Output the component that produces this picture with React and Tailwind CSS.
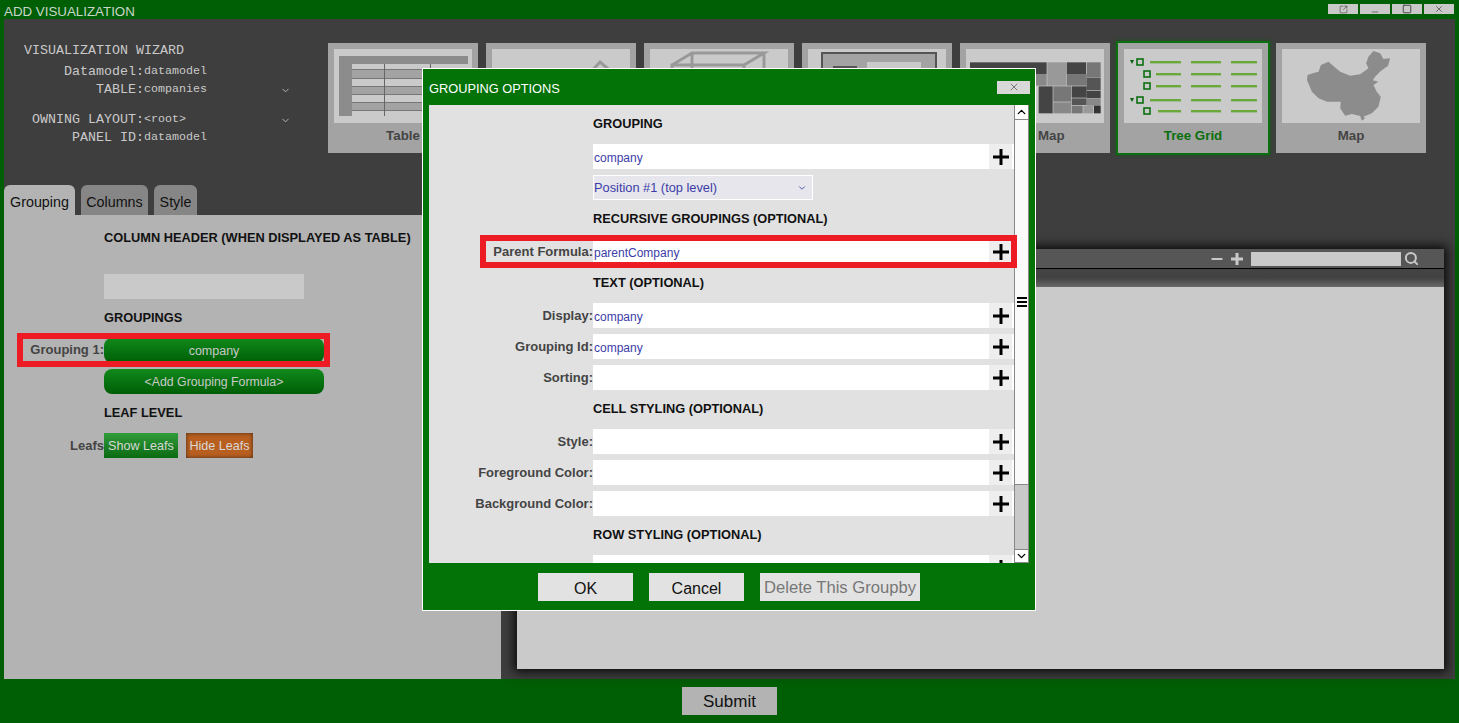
import React from "react";
import { ChevronDown, ChevronUp, Minus, Search, Square, SquareArrowOutUpRight, X } from "lucide-react";

const CHINA =
  "592,120 610,114 625,110 632,90 655,80 672,95 690,110 720,122 750,118 775,100 768,85 775,65 790,48 810,55 820,72 840,70 834,92 812,108 795,125 788,136 805,140 790,150 800,170 812,185 805,215 785,235 760,245 765,250 755,257 750,243 725,237 705,242 690,220 692,200 650,200 625,190 605,170 590,135";

const BLOCKS = [
  ["#444", -180, 52, 230, 35],
  ["#999", 52, 52, 56, 70],
  ["#444", 110, 52, 58, 35],
  ["#777", 170, 52, 42, 45],
  ["#888", 14, 87, 36, 35],
  ["#777", 110, 87, 60, 35],
  ["#555", 170, 98, 42, 37],
  ["#444", 26, 124, 42, 81],
  ["#777", 70, 124, 53, 46],
  ["#444", 125, 124, 45, 34],
  ["#444", 170, 137, 42, 23],
  ["#555", 125, 160, 45, 20],
  ["#888", 170, 162, 42, 20],
  ["#888", 70, 172, 53, 33],
  ["#777", 125, 182, 33, 23],
  ["#999", 160, 182, 30, 23],
  ["#333", 192, 182, 20, 23],
];

const TREE_ROWS = [
  { y: 13, box: 13, arrow: true, first: 26 },
  { y: 25, box: 20, first: 32 },
  { y: 37, box: 20, first: 32 },
  { y: 51, box: 13, arrow: true, first: 26 },
  { y: 62, box: 20, first: 34 },
];

function TableIcon() {
  return (
    <svg viewBox="0 0 138 74" className="w-full h-full">
      <rect x="5" y="7" width="129" height="8" fill="#8c8c8c" />
      <rect x="5" y="7" width="13" height="60" fill="#8c8c8c" />
      <rect x="18" y="21" width="116" height="8" fill="#a3a3a3" />
      <rect x="18" y="37" width="116" height="8" fill="#a3a3a3" />
      <rect x="18" y="53" width="116" height="8" fill="#a3a3a3" />
      {[20, 29, 37, 45, 53, 61].map((y) => (
        <rect key={y} x="18" y={y} width="116" height="1" fill="#777" />
      ))}
      <rect x="50" y="15" width="1" height="52" fill="#666" />
      <rect x="96" y="15" width="1" height="52" fill="#666" />
    </svg>
  );
}

function ChartIcon() {
  return (
    <svg viewBox="0 0 138 74" className="w-full h-full">
      <polyline points="98,24 108,13 128,30" fill="none" stroke="#999" strokeWidth="3" />
    </svg>
  );
}

function CubeIcon() {
  return (
    <svg viewBox="0 0 138 74" className="w-full h-full">
      <path d="M22 16 42 4h72L94 16H22v40h72V16M42 4v40M114 4v40L94 56" fill="none" stroke="#999" strokeWidth="3" />
    </svg>
  );
}

function LayoutIcon() {
  return (
    <svg viewBox="0 0 138 74" className="w-full h-full">
      <rect x="14" y="4" width="114" height="60" fill="#a3a3a3" stroke="#555" strokeWidth="2" />
      <rect x="25" y="17" width="24" height="40" fill="#555" />
      <rect x="59" y="13" width="54" height="44" fill="#cacaca" />
    </svg>
  );
}

function TreemapIcon() {
  return (
    <svg viewBox="-192 12 414 222" preserveAspectRatio="none" className="w-full h-full">
      {BLOCKS.map(([fill, x, y, w, h]) => (
        <rect key={`${x}-${y}`} x={x} y={y} width={w} height={h} fill={fill} />
      ))}
    </svg>
  );
}

function TreeGridIcon() {
  return (
    <svg viewBox="0 0 138 74" className="w-full h-full">
      {TREE_ROWS.map((row) => (
        <g key={row.y}>
          {row.arrow && <path d={`M6 ${row.y - 2}h4l-2 4z`} fill="#0b5f10" />}
          <rect x={row.box} y={row.y - 3} width="6" height="6" fill="none" stroke="#0b6f0f" strokeWidth="1.6" />
          <rect x={row.first} y={row.y - 1} width={57 - row.first} height="2.4" fill="#6aa83c" />
          <rect x="67" y={row.y - 1} width="30" height="2.4" fill="#6aa83c" />
          <rect x="107" y={row.y - 1} width="26" height="2.4" fill="#6aa83c" />
        </g>
      ))}
    </svg>
  );
}

function MapIcon() {
  return (
    <svg viewBox="515 42 415 222" preserveAspectRatio="none" className="w-full h-full">
      <polygon points={CHINA} fill="#8c8c8c" />
    </svg>
  );
}

function Thumb({ label, selected, children }) {
  return (
    <div
      className={`w-[150px] h-[110px] shrink-0 px-[6px] pt-[6px] bg-[#a3a3a3] ${
        selected ? "outline-2 outline-[#0b6f0f] shadow-[0_0_4px_2px_#14561a]" : ""
      }`}
    >
      <div className="h-[74px] bg-[#cacaca]">{children}</div>
      <div
        className={`h-[24px] leading-[26px] text-center text-[13.33px] font-bold ${
          selected ? "text-[#0b6f0f]" : "text-[#444]"
        }`}
      >
        {label}
      </div>
    </div>
  );
}

function WizardRow({ label, value, select, className = "" }) {
  return (
    <div className={`flex items-center h-[18px] ${className}`}>
      <div className="w-[120px] text-right">{label}:</div>
      <div className="w-[136px] text-[11.67px]">{value}</div>
      {select && <ChevronDown size={11} strokeWidth={1.8} />}
    </div>
  );
}

function PlusMark() {
  return (
    <svg width="16" height="16" viewBox="0 0 16 16">
      <path d="M8 0v16M0 8h16" stroke="#000" strokeWidth="3" />
    </svg>
  );
}

function FormRow({ label, value, highlight }) {
  return (
    <div className="relative flex h-[25px] mt-[6px] shrink-0">
      <div className="w-[164px] text-right text-[13px] font-bold text-[#444] leading-[26px]">{label}</div>
      <div className="flex-1 flex bg-white">
        <div className="flex-1 pl-[1px] text-[12px] text-[#3c3ca8] leading-[28px]">{value}</div>
        <div className="w-[23px] mr-[2px] bg-[#eeeeee] flex items-center justify-center">
          <PlusMark />
        </div>
      </div>
      {highlight && (
        <div className="absolute left-[51px] -right-[3px] -top-[4px] -bottom-[4px] border-[6px] border-[#ed1c24] pointer-events-none" />
      )}
    </div>
  );
}

function ModalHeading({ children }) {
  return (
    <div className="h-[33px] shrink-0 pl-[164px] text-[12.8px] font-bold text-[#111] leading-[38px]">{children}</div>
  );
}

function ModalButton({ children, className = "" }) {
  return (
    <button className={`h-[28px] pt-[3px] bg-[#e2e2e2] ${className}`}>{children}</button>
  );
}

function GroupingModal() {
  return (
    <div className="absolute left-[422px] top-[68px] w-[614px] h-[543px] border border-white bg-[#037207] flex flex-col">
      <div className="h-[36px] shrink-0 flex items-center justify-between pl-[6px] pr-[5px] text-[12.8px] text-white">
        <span className="pt-[4px]">GROUPING OPTIONS</span>
        <div className="w-[33px] h-[13px] bg-[#d8d8d8] text-[#333] flex items-center justify-center">
          <X size={12} strokeWidth={1.2} />
        </div>
      </div>
      <div className="mx-[6px] h-[458px] shrink-0 flex bg-[#e1e1e1] overflow-hidden">
        <div className="flex-1 flex flex-col">
          <ModalHeading>GROUPING</ModalHeading>
          <div className="mt-[6px] ml-[164px] h-[25px] shrink-0 flex bg-white">
            <div className="flex-1 pl-[1px] text-[12px] text-[#3c3ca8] leading-[28px]">company</div>
            <div className="w-[23px] mr-[2px] bg-[#eeeeee] flex items-center justify-center">
              <PlusMark />
            </div>
          </div>
          <div className="mt-[6px] ml-[164px] w-[220px] h-[25px] shrink-0 flex items-center justify-between pr-[5px] border border-white bg-[#e6e6ec] text-[12.8px] text-[#3c3ca8]">
            <span>Position #1 (top level)</span>
            <ChevronDown size={10} strokeWidth={2} />
          </div>
          <ModalHeading>RECURSIVE GROUPINGS (OPTIONAL)</ModalHeading>
          <FormRow label="Parent Formula:" value="parentCompany" highlight />
          <ModalHeading>TEXT (OPTIONAL)</ModalHeading>
          <FormRow label="Display:" value="company" />
          <FormRow label="Grouping Id:" value="company" />
          <FormRow label="Sorting:" />
          <ModalHeading>CELL STYLING (OPTIONAL)</ModalHeading>
          <FormRow label="Style:" />
          <FormRow label="Foreground Color:" />
          <FormRow label="Background Color:" />
          <ModalHeading>ROW STYLING (OPTIONAL)</ModalHeading>
          <FormRow label="Style:" />
        </div>
        <div className="w-[15px] shrink-0 flex flex-col border-x border-[#888] bg-[#c9c9c9]">
          <div className="h-[15px] bg-white flex items-center justify-center border-b border-[#888] text-black">
            <ChevronUp size={14} strokeWidth={2.5} />
          </div>
          <div className="h-[365px] bg-[#fafafa] flex flex-col items-center justify-center gap-[2px] border-b border-[#888]">
            <div className="w-[10px] h-[2px] bg-black" />
            <div className="w-[10px] h-[2px] bg-black" />
            <div className="w-[10px] h-[2px] bg-black" />
          </div>
          <div className="flex-1" />
          <div className="h-[14px] bg-white flex items-center justify-center border-y border-[#888] text-black">
            <ChevronDown size={14} strokeWidth={2.5} />
          </div>
        </div>
      </div>
      <div className="flex justify-center gap-4 pt-[10px]">
        <ModalButton className="w-[95px] text-[16px] text-[#111]">OK</ModalButton>
        <ModalButton className="w-[95px] text-[16px] text-[#111]">Cancel</ModalButton>
        <ModalButton className="w-[160px] text-[16.6px] text-[#777]">Delete This Groupby</ModalButton>
      </div>
    </div>
  );
}

function LeftHeading({ children, className = "" }) {
  return (
    <div className={`pl-[100px] h-[18px] leading-[20px] text-[12.8px] font-bold text-[#111] ${className}`}>
      {children}
    </div>
  );
}

function GreenPill({ children, className = "" }) {
  return (
    <div
      className={`w-[220px] h-[25px] rounded-[8px] bg-linear-to-b from-[#118a1b] to-[#005e05] text-[#c9c9c9] text-[12.3px] leading-[27px] text-center ${className}`}
    >
      {children}
    </div>
  );
}

export default function App() {
  return (
    <div className="relative w-[1459px] h-[723px] overflow-hidden flex flex-col bg-[#005e05] font-['Liberation_Sans',Arial,sans-serif]">
      {/* Title bar */}
      <div className="h-[19px] shrink-0 flex justify-between pl-[4px] pr-[5px] text-[13.33px] leading-[23px] text-[#c9d6c9]">
        <span>ADD VISUALIZATION</span>
        <div className="flex gap-[2px] pt-[4px] text-[#333]">
          <div className="w-[30px] h-[10px] bg-[#c9c9c9] flex items-center justify-center">
            <SquareArrowOutUpRight size={9} strokeWidth={1.5} />
          </div>
          <div className="w-[30px] h-[10px] bg-[#c9c9c9] flex items-end justify-center">
            <Minus size={10} strokeWidth={1.5} className="translate-y-[3px]" />
          </div>
          <div className="w-[30px] h-[10px] bg-[#c9c9c9] flex items-center justify-center">
            <Square size={10} strokeWidth={2} />
          </div>
          <div className="w-[30px] h-[10px] bg-[#c9c9c9] flex items-center justify-center">
            <X size={10} strokeWidth={1.5} />
          </div>
        </div>
      </div>

      <div className="flex-1 mx-[4px] flex flex-col bg-[#3e3e3e]">
        {/* Wizard info and chart type picker */}
        <div className="h-[166px] shrink-0 flex">
          <div className="w-[324px] shrink-0 pl-[20px] pt-[23px] font-['Liberation_Mono',monospace] text-[13.33px] text-[#c9c9c9]">
            <div className="h-[18px] leading-[18px]">VISUALIZATION WIZARD</div>
            <WizardRow label="Datamodel" value="datamodel" className="mt-[3px]" />
            <WizardRow label="TABLE" value="companies" select />
            <WizardRow label="OWNING LAYOUT" value="<root>" select className="mt-[12px]" />
            <WizardRow label="PANEL ID" value="datamodel" />
          </div>
          <div className="flex gap-2 pt-[24px]">
            <Thumb label="Table"><TableIcon /></Thumb>
            <Thumb><ChartIcon /></Thumb>
            <Thumb><CubeIcon /></Thumb>
            <Thumb><LayoutIcon /></Thumb>
            <Thumb label="Heat Map"><TreemapIcon /></Thumb>
            <Thumb label="Tree Grid" selected><TreeGridIcon /></Thumb>
            <Thumb label="Map"><MapIcon /></Thumb>
          </div>
        </div>

        <div className="flex-1 flex">
          {/* Left editor */}
          <div className="w-[497px] shrink-0 flex flex-col">
            <div className="h-[30px] shrink-0 flex gap-[6px] text-[14.3px] text-[#111]">
              <div className="w-[71px] rounded-t-[6px] bg-[#b3b3b3] text-center leading-[35px]">Grouping</div>
              <div className="w-[67px] rounded-t-[6px] bg-[#868686] text-center leading-[35px]">Columns</div>
              <div className="w-[43px] rounded-t-[6px] bg-[#868686] text-center leading-[35px]">Style</div>
            </div>
            <div className="flex-1 pt-[13px] bg-[#b3b3b3]">
              <LeftHeading>COLUMN HEADER (WHEN DISPLAYED AS TABLE)</LeftHeading>
              <div className="ml-[100px] mt-[28px] w-[200px] h-[25px] bg-[#c9c9c9]" />
              <LeftHeading className="mt-[9px]">GROUPINGS</LeftHeading>
              <div className="relative flex h-[25px] mt-[12px]">
                <div className="w-[100px] text-right text-[13px] font-bold text-[#444] leading-[24px]">Grouping 1:</div>
                <GreenPill className="text-[12.5px]">company</GreenPill>
                <div className="absolute left-[13px] -top-[5px] w-[313px] h-[34px] border-[6px] border-[#ed1c24] pointer-events-none" />
              </div>
              <GreenPill className="ml-[100px] mt-[6px]">&lt;Add Grouping Formula&gt;</GreenPill>
              <LeftHeading className="mt-[9px]">LEAF LEVEL</LeftHeading>
              <div className="flex mt-[12px] text-[12.6px]">
                <div className="w-[100px] text-right text-[13px] font-bold text-[#444] leading-[25px]">Leafs</div>
                <div className="w-[74px] h-[25px] bg-linear-to-b from-[#309c3b] to-[#0a6a10] text-[#d8d8d8] text-center leading-[27px]">Show Leafs</div>
                <div className="ml-[8px] w-[67px] h-[25px] bg-[#b85f20] shadow-[inset_0_0_4px_#4a2c14] text-[#d8d8d8] text-center leading-[27px]">Hide Leafs</div>
              </div>
            </div>
          </div>

          {/* Preview panel */}
          <div className="flex-1">
            <div className="ml-[16px] mt-[64px] w-[927px] h-[420px] flex flex-col bg-[#cacaca] shadow-[0_0_10px_3px_rgba(0,0,0,0.85)]">
              <div className="h-[20px] shrink-0 flex items-center justify-end bg-[#565656] border-b border-black text-[#c9c9c9] pr-[25px]">
                <Minus size={16} strokeWidth={3} />
                <svg width="14" height="14" viewBox="0 0 14 14" className="ml-[5px]">
                  <path d="M7 1v12M1 7h12" stroke="#c9c9c9" strokeWidth="3" />
                </svg>
                <div className="ml-[7px] w-[150px] h-[14px] bg-[#c9c9c9]" />
                <Search size={15} strokeWidth={3.2} className="ml-[3px]" />
              </div>
              <div className="h-[18px] shrink-0 bg-linear-to-b from-[#434343] via-[#434343] to-[#6a6a6a]" />
            </div>
          </div>
        </div>
      </div>

      {/* Footer */}
      <div className="h-[44px] shrink-0 flex justify-center pt-[8px]">
        <button className="w-[95px] h-[28px] pt-[2px] bg-[#b3b3b3] text-[17px] text-[#111]">Submit</button>
      </div>

      <GroupingModal />
    </div>
  );
}
